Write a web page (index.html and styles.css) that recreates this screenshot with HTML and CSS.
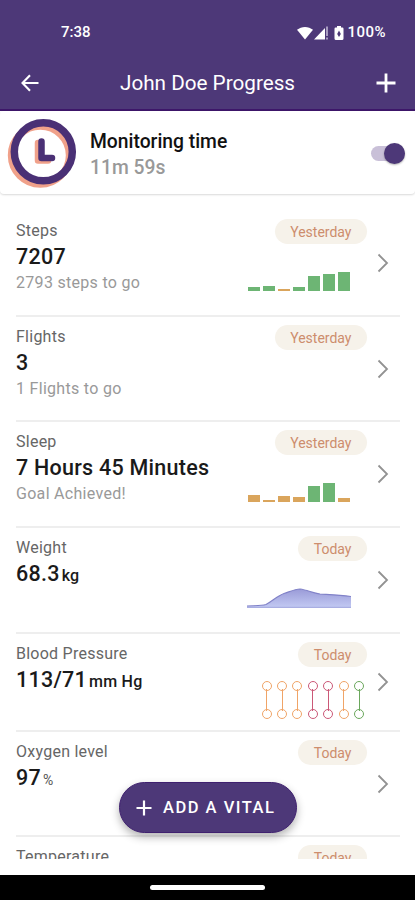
FILE: index.html
```html
<!DOCTYPE html>
<html lang="en">
<head>
  <meta charset="UTF-8">
  <meta name="viewport" content="width=device-width, initial-scale=1.0">
  <title>John Doe Progress</title>
  <link rel="stylesheet" href="styles.css">
</head>
<body>
  <div class="phone">
    <header class="header">
      <div class="status-bar">
        <span>7:38</span>
        <div class="status-icons">
          <svg width="18" height="16" viewBox="0 0 18 16"><path d="M1 4.8C5.5.9 12.5.9 17 4.8L9 14.5z" fill="#fff"/></svg>
          <svg width="15" height="16" viewBox="0 0 15 16"><path d="M0 14.5 11 3V14.5z" fill="#fff"/><path d="M13 1.500V11M13 12.500V14.500" stroke="#d8d0e6" stroke-width="1.3"/></svg>
          <svg class="battery" width="10" height="16" viewBox="0 0 10 16"><path d="M3 1h4v1.5h1.3Q9.5 2.5 9.5 3.7v9.8Q9.5 15 8 15H2Q.5 15 .5 13.5V3.7Q.5 2.5 1.7 2.5H3z" fill="#fff"/><path d="M5 5.500 6.800 9 5 12 3.200 9z" fill="#4d3878"/></svg>
          <span>100%</span>
        </div>
      </div>
      <div class="title-bar">
        <svg class="back" width="18" height="18" viewBox="0 0 18 18"><path d="M17.500 9H1.500M9 1.200 1.500 9 9 16.800" fill="none" stroke="#fff" stroke-width="2.100"/></svg>
        <h1>John Doe Progress</h1>
        <svg class="plus" width="20" height="20" viewBox="0 0 20 20"><path d="M10 .5v19M.5 10h19" stroke="#fff" stroke-width="2.800"/></svg>
      </div>
    </header>

    <section class="monitoring">
      <svg class="clock" width="72" height="72" viewBox="0 0 72 72" fill="none">
        <circle cx="33.300" cy="38.300" r="29" stroke="#f0a18a" stroke-width="7"/>
        <path d="M31 26v17.500h10" stroke="#f0a18a" stroke-width="6.500" stroke-linecap="round" stroke-linejoin="round"/>
        <circle cx="36.300" cy="34.800" r="29" stroke="#4a3075" stroke-width="7.500"/>
        <path d="M34.500 24.500v16.500H45" stroke="#4a3075" stroke-width="6.500" stroke-linecap="round" stroke-linejoin="round"/>
      </svg>
      <div class="monitoring-text">
        <h2>Monitoring time</h2>
        <p>11m 59s</p>
      </div>
      <div class="toggle"><span class="knob"></span></div>
    </section>

    <main class="list">
      <div class="row">
        <div class="info">
          <div class="label">Steps</div>
          <div class="value">7207</div>
          <div class="goal">2793 steps to go</div>
        </div>
        <div class="side">
          <span class="badge">Yesterday</span>
          <div class="bars">
            <span class="green" style="height: 4px"></span>
            <span class="green" style="height: 5px"></span>
            <span class="orange" style="height: 2px"></span>
            <span class="green" style="height: 4px"></span>
            <span class="green" style="height: 14.5px"></span>
            <span class="green" style="height: 17px"></span>
            <span class="green" style="height: 19px"></span>
          </div>
        </div>
        <svg class="chevron" width="12" height="20" viewBox="0 0 12 20"><path d="M1.500 1.500 10 10l-8.500 8.500"/></svg>
      </div>

      <div class="row">
        <div class="info">
          <div class="label">Flights</div>
          <div class="value">3</div>
          <div class="goal">1 Flights to go</div>
        </div>
        <div class="side">
          <span class="badge">Yesterday</span>
        </div>
        <svg class="chevron" width="12" height="20" viewBox="0 0 12 20"><path d="M1.500 1.500 10 10l-8.500 8.500"/></svg>
      </div>

      <div class="row">
        <div class="info">
          <div class="label">Sleep</div>
          <div class="value">7 Hours 45 Minutes</div>
          <div class="goal">Goal Achieved!</div>
        </div>
        <div class="side">
          <span class="badge">Yesterday</span>
          <div class="bars">
            <span class="orange" style="height: 7px"></span>
            <span class="orange" style="height: 2px"></span>
            <span class="orange" style="height: 6px"></span>
            <span class="orange" style="height: 5px"></span>
            <span class="green" style="height: 16.5px"></span>
            <span class="green" style="height: 19px"></span>
            <span class="orange" style="height: 4px"></span>
          </div>
        </div>
        <svg class="chevron" width="12" height="20" viewBox="0 0 12 20"><path d="M1.500 1.500 10 10l-8.500 8.500"/></svg>
      </div>

      <div class="row">
        <div class="info">
          <div class="label">Weight</div>
          <div class="value">68.3<small>kg</small></div>
        </div>
        <div class="side">
          <span class="badge">Today</span>
          <svg class="area" width="104" height="20" viewBox="0 0 104 20">
            <defs>
              <linearGradient id="fill" x1="0" y1="0" x2="0" y2="1">
                <stop offset="0" stop-color="#9a9bd8"/>
                <stop offset="1" stop-color="#c3caf3"/>
              </linearGradient>
            </defs>
            <path d="M0 18C8 17.5 14 18 19 16.5C26 13 30 8 37 5.5C42 4 48 1 53 1C60 2 66 5 73 6C82 6.5 92 6.5 104 8.5V20H0z" fill="url(#fill)"/>
            <path d="M0 18C8 17.5 14 18 19 16.5C26 13 30 8 37 5.5C42 4 48 1 53 1C60 2 66 5 73 6C82 6.5 92 6.5 104 8.5" fill="none" stroke="#8182c8" stroke-width="1.2"/>
            <path d="M0 19.3H104" stroke="#a3a8de"/>
          </svg>
        </div>
        <svg class="chevron" width="12" height="20" viewBox="0 0 12 20"><path d="M1.500 1.500 10 10l-8.500 8.500"/></svg>
      </div>

      <div class="row short">
        <div class="info">
          <div class="label">Blood Pressure</div>
          <div class="value">113/71<small>mm Hg</small></div>
        </div>
        <div class="side">
          <span class="badge">Today</span>
          <div class="pressure">
            <span class="reading high"></span>
            <span class="reading high"></span>
            <span class="reading high"></span>
            <span class="reading alert"></span>
            <span class="reading alert"></span>
            <span class="reading high"></span>
            <span class="reading normal"></span>
          </div>
        </div>
        <svg class="chevron" width="12" height="20" viewBox="0 0 12 20"><path d="M1.500 1.500 10 10l-8.500 8.500"/></svg>
      </div>

      <div class="row">
        <div class="info">
          <div class="label">Oxygen level</div>
          <div class="value">97<small class="percent">%</small></div>
        </div>
        <div class="side">
          <span class="badge">Today</span>
        </div>
        <svg class="chevron" width="12" height="20" viewBox="0 0 12 20"><path d="M1.500 1.500 10 10l-8.500 8.500"/></svg>
      </div>

      <div class="row">
        <div class="info">
          <div class="label">Temperature</div>
        </div>
        <div class="side">
          <span class="badge">Today</span>
        </div>
        <svg class="chevron" width="12" height="20" viewBox="0 0 12 20"><path d="M1.500 1.500 10 10l-8.500 8.500"/></svg>
      </div>
    </main>

    <button class="add-vital">
      <svg width="16" height="16" viewBox="0 0 16 16"><path d="M8 .5v15M.5 8h15" stroke="#fff" stroke-width="2.200"/></svg>
      <span>ADD A VITAL</span>
    </button>

    <footer class="nav-bar"><span></span></footer>
  </div>
</body>
</html>
```

FILE: styles.css
```css
* {
  margin: 0;
  padding: 0;
  box-sizing: border-box;
}

body {
  font-family: Roboto, "Liberation Sans", sans-serif;
  background-color: #fff;
}

svg {
  display: block;
  flex-shrink: 0;
}

.phone {
  position: relative;
  display: flex;
  flex-direction: column;
  width: 415px;
  height: 900px;
  overflow: hidden;
}

.header {
  height: 111px;
  background-color: #4d3878;
  border-bottom: 2px solid #3d1669;
  color: #fff;
}

.status-bar {
  display: flex;
  justify-content: space-between;
  padding: 24px 29px 0 61px;
  font-size: 15px;
  font-weight: 500;
  line-height: 17px;
}

.status-icons {
  display: flex;
  align-items: center;
  letter-spacing: 0.5px;
}

.battery {
  margin: 0 3px 0 5px;
}

.title-bar {
  display: flex;
  align-items: center;
  justify-content: space-between;
  padding: 27px 19px 0 21px;
}

.title-bar h1 {
  font-size: 20.7px;
  font-weight: 400;
  line-height: 30px;
}

.monitoring {
  display: flex;
  align-items: center;
  height: 83px;
  padding: 0 10px 0 7px;
  border-radius: 4px;
  box-shadow: 0 1px 2px rgba(0, 0, 0, 0.15);
}

.monitoring-text {
  flex: 1;
  margin-left: 11px;
  padding-top: 4px;
}

.monitoring-text h2 {
  font-size: 19.3px;
  font-weight: 500;
  line-height: 26px;
  color: #111;
}

.monitoring-text p {
  font-size: 19.3px;
  font-weight: 500;
  line-height: 26px;
  color: #999;
}

.toggle {
  display: flex;
  align-items: center;
  justify-content: flex-end;
  width: 34px;
  height: 15px;
  margin-top: 2px;
  border-radius: 8px;
  background-color: #c9c0d8;
}

.knob {
  flex-shrink: 0;
  width: 21px;
  height: 21px;
  border-radius: 50%;
  background-color: #4d3878;
  box-shadow: 0 1px 2px rgba(0, 0, 0, 0.3);
}

.list {
  height: 665px;
  padding: 17px 15px 0 16px;
  overflow: hidden;
}

.row {
  display: flex;
  align-items: center;
  height: 105.7px;
  border-bottom: 2px solid #eee;
}

.row.short {
  height: 98px;
}

.info {
  flex: 1;
  align-self: stretch;
  padding-top: 7px;
  line-height: 26px;
}

.label {
  font-size: 16px;
  letter-spacing: 0.25px;
  color: #666;
}

.value {
  font-size: 21.5px;
  font-weight: 500;
  letter-spacing: 0.25px;
  color: #1a1a1a;
}

.value small {
  margin-left: 2px;
  font-size: 16px;
}

.value .percent {
  margin-left: 2px;
  font-size: 14px;
  font-weight: 400;
  color: #555;
}

.goal {
  font-size: 16px;
  letter-spacing: 0.3px;
  color: #999;
}

.side {
  display: flex;
  flex-direction: column;
  align-items: flex-end;
  justify-content: space-between;
  align-self: stretch;
  padding: 8px 10px 24px 0;
}

.badge {
  padding: 1px 15.5px 0;
  border-radius: 13px;
  background-color: #f6f2ea;
  font-size: 14px;
  line-height: 24px;
  color: #cd8d6d;
}

.bars {
  display: flex;
  align-items: flex-end;
  gap: 3px;
  margin-right: 17px;
}

.bars span {
  width: 12px;
}

.green {
  background-color: #6db574;
}

.orange {
  background-color: #daa55c;
}

.area {
  margin-right: 16px;
}

.short .side {
  padding-bottom: 11px;
}

.pressure {
  display: flex;
  gap: 7.4px;
  margin-right: 4px;
}

/* systolic and diastolic circles joined by a line */
.reading {
  display: flex;
  flex-direction: column;
  align-items: center;
  width: 8px;
  height: 38px;
  background: linear-gradient(currentColor, currentColor) center / 1px 22px no-repeat;
}

.reading::before,
.reading::after {
  content: "";
  width: 8px;
  height: 8px;
  border: 1.5px solid;
  border-radius: 50%;
}

.reading::before {
  margin-bottom: auto;
}

.high {
  color: #f0a467;
}

.alert {
  color: #cb5877;
}

.normal {
  color: #6aa75c;
}

.chevron {
  margin-right: 11px;
  fill: none;
  stroke: #929292;
  stroke-width: 1.8;
}

.add-vital {
  position: absolute;
  left: 119px;
  top: 782px;
  display: flex;
  align-items: center;
  gap: 11px;
  width: 178px;
  height: 51px;
  padding-left: 16px;
  border: 1px solid #3f206f;
  border-radius: 26px;
  background-color: #4d3878;
  box-shadow: 0 4px 8px rgba(0, 0, 0, 0.3);
  color: #fff;
  font-family: inherit;
  font-size: 16.5px;
  font-weight: 500;
  letter-spacing: 1.5px;
}

.nav-bar {
  display: flex;
  justify-content: center;
  height: 25px;
  margin-top: auto;
  padding-top: 10px;
  background-color: #000;
}

.nav-bar span {
  width: 115px;
  height: 5px;
  border-radius: 3px;
  background-color: #fff;
}
```
